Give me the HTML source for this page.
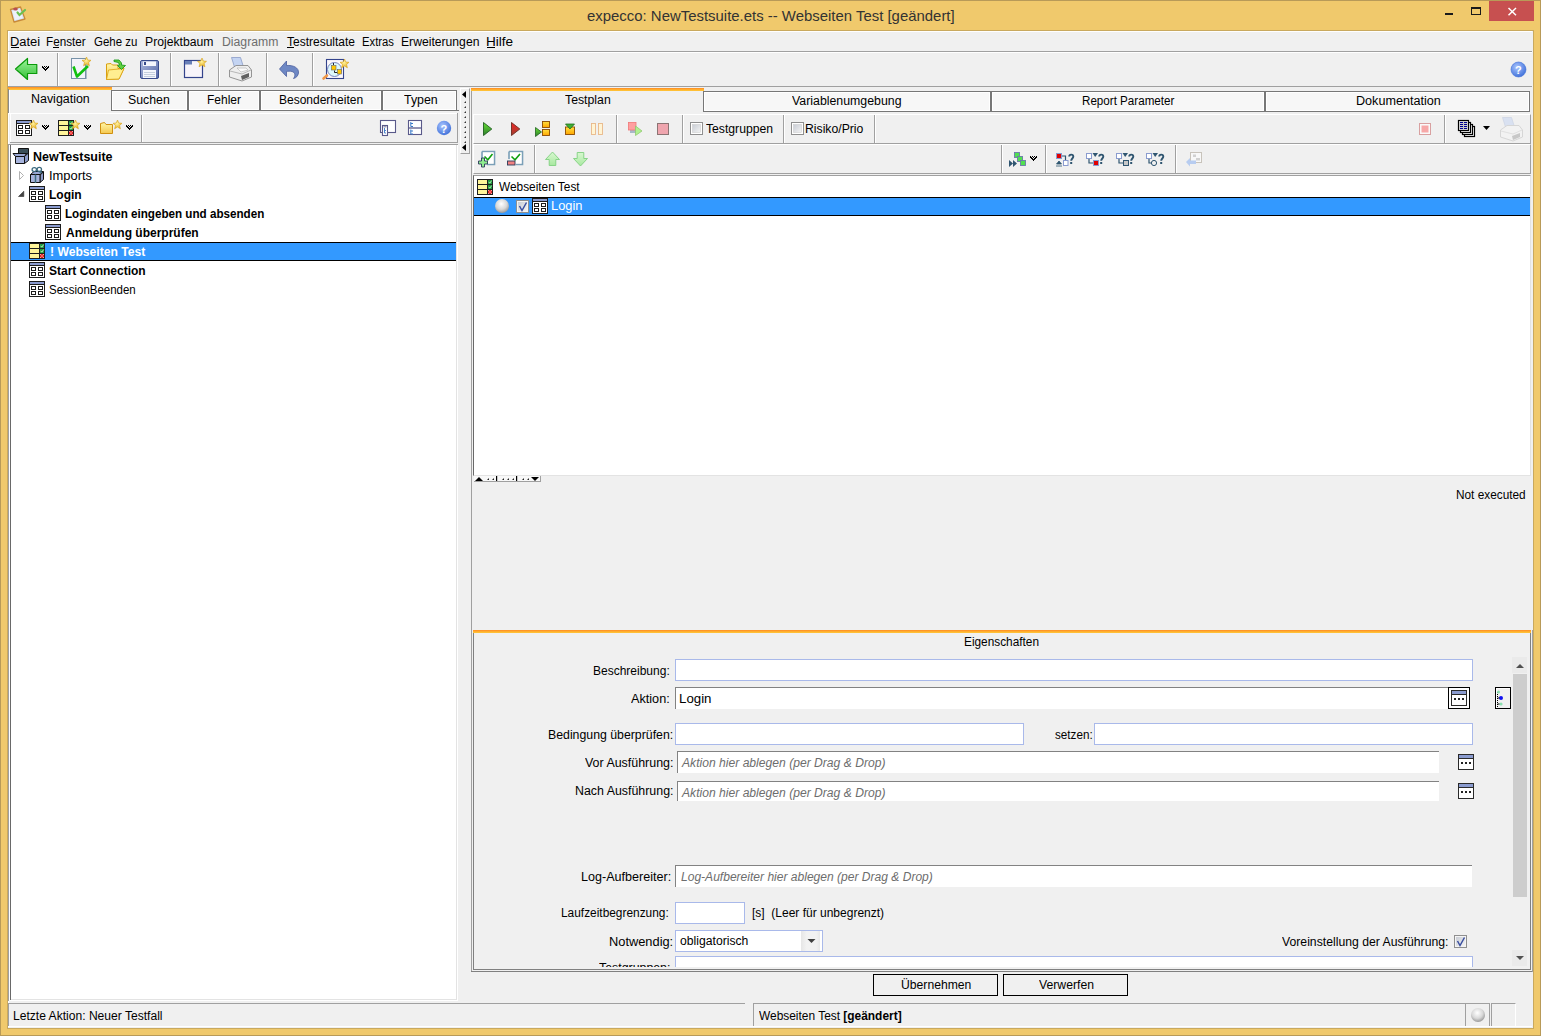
<!DOCTYPE html>
<html><head><meta charset="utf-8"><title>expecco</title>
<style>
html,body{margin:0;padding:0;}
body{width:1541px;height:1036px;position:relative;overflow:hidden;background:#F0C96C;font-family:"Liberation Sans",sans-serif;}
div{box-sizing:border-box;}
.a{position:absolute;}
.t{position:absolute;white-space:pre;transform-origin:0 0;font-family:"Liberation Sans",sans-serif;}
.hl{position:absolute;height:1px;}
.vl{position:absolute;width:1px;}
svg{position:absolute;overflow:visible;}
.tab{position:absolute;background:#F7F7F7;border:1px solid #777;box-shadow:inset 1px 1px 0 #fff, inset -1px -1px 0 #fff;}
.sep{position:absolute;width:2px;border-left:1px solid #a0a0a0;border-right:1px solid #fff;}
</style></head><body>
<!-- frame -->
<div class="a" style="left:0;top:0;width:1541px;height:1036px;border:1px solid #B89A58;"></div>
<div class="a" style="left:7px;top:30px;width:1527px;height:999px;border:1px solid #C9A95E;background:#F0F0F0;"></div>
<div class="hl" style="left:8px;top:31px;width:1524px;background:#fff"></div>
<div class="vl" style="left:8px;top:31px;height:996px;background:#fff"></div>
<!-- window buttons -->
<div class="a" style="left:1489px;top:1px;width:45px;height:20px;background:#C75050"></div>
<svg style="left:0;top:0" width="1541" height="30">
 <path d="M1508.5 8 L1516 15.2 M1516 8 L1508.5 15.2" stroke="#fff" stroke-width="1.5"/>
 <rect x="1445" y="13" width="8" height="2" fill="#1a1a1a"/>
 <rect x="1471.5" y="7.5" width="9" height="7" fill="none" stroke="#1a1a1a" stroke-width="1"/>
 <rect x="1471" y="7" width="10" height="2" fill="#1a1a1a"/>
</svg>
<!-- menu underline accents -->
<div class="hl" style="left:11px;top:47px;width:8px;background:#000"></div>
<div class="hl" style="left:53px;top:47px;width:6px;background:#000"></div>
<div class="hl" style="left:287px;top:47px;width:7px;background:#000"></div>
<div class="hl" style="left:487px;top:47px;width:8px;background:#000"></div>
<!-- menu bar bottom -->
<div class="hl" style="left:8px;top:51px;width:1524px;background:#A0A0A0"></div>
<div class="hl" style="left:8px;top:52px;width:1524px;background:#fff"></div>
<!-- toolbar separators -->
<div class="sep" style="left:57px;top:53px;height:33px"></div>
<div class="sep" style="left:170px;top:53px;height:33px"></div>
<div class="sep" style="left:218px;top:53px;height:33px"></div>
<div class="sep" style="left:266px;top:53px;height:33px"></div>
<div class="sep" style="left:312px;top:53px;height:33px"></div>
<!-- toolbar bottom -->
<div class="hl" style="left:8px;top:86px;width:1524px;background:#A0A0A0"></div>

<!-- ===== LEFT PANEL ===== -->
<div class="a" style="left:8px;top:87px;width:104px;height:3px;background:linear-gradient(#FF8A22,#FFB430 60%,#FFC83A)"></div>
<div class="vl" style="left:8px;top:89px;height:24px;background:#8a8a8a"></div>
<div class="vl" style="left:9px;top:90px;height:23px;background:#fff"></div>
<div class="tab" style="left:111px;top:90px;width:77px;height:21px;border-bottom-width:1px"></div>
<div class="tab" style="left:188px;top:90px;width:72px;height:21px;border-bottom-width:1px"></div>
<div class="tab" style="left:260px;top:90px;width:122px;height:21px;border-bottom-width:1px"></div>
<div class="tab" style="left:382px;top:90px;width:75px;height:21px;border-bottom-width:1px"></div>
<div class="hl" style="left:111px;top:110px;width:348px;background:#777"></div>
<div class="hl" style="left:9px;top:113px;width:448px;background:#fff"></div>
<div class="vl" style="left:10px;top:113px;height:29px;background:#fff"></div>
<div class="vl" style="left:457px;top:113px;height:30px;background:#A0A0A0"></div>
<div class="hl" style="left:10px;top:142px;width:448px;background:#A0A0A0"></div>
<div class="sep" style="left:141px;top:115px;height:27px"></div>
<!-- left tree -->
<div class="a" style="left:8px;top:144px;width:450px;height:857px;background:#fff;border-left:1px solid #A0A0A0;border-top:1px solid #A0A0A0;"></div>
<div class="vl" style="left:10px;top:145px;height:855px;background:#696969"></div>
<div class="vl" style="left:456px;top:145px;height:855px;background:#E3E3E3"></div>
<div class="hl" style="left:11px;top:999px;width:446px;background:#E3E3E3"></div>
<div class="a" style="left:11px;top:242px;width:445px;height:19px;background:#3399FF;border-top:1px solid #000;border-bottom:1px solid #000"></div>

<!-- splitter -->
<div class="a" style="left:460px;top:88px;width:10px;height:66px;border-left:1px solid #fff;border-top:1px solid #fff;border-right:1px solid #A0A0A0;border-bottom:1px solid #A0A0A0"></div>
<svg style="left:0;top:0" width="1" height="1">
 <path d="M466 91 L466 98 L462 94.5 Z" fill="#000"/>
 <path d="M466 144 L466 151 L462 147.5 Z" fill="#000"/>
 <g fill="#333"><path d="M464 103 L466 101 L466 103 Z"/><path d="M464 108 L466 106 L466 108 Z"/><path d="M464 113 L466 111 L466 113 Z"/><path d="M464 118 L466 116 L466 118 Z"/><path d="M464 123 L466 121 L466 123 Z"/><path d="M464 128 L466 126 L466 128 Z"/><path d="M464 133 L466 131 L466 133 Z"/><path d="M464 138 L466 136 L466 138 Z"/><path d="M464 143 L466 141 L466 143 Z"/></g>
</svg>

<!-- ===== RIGHT PANEL ===== -->
<div class="vl" style="left:471px;top:91px;height:881px;background:#A0A0A0"></div>
<div class="a" style="left:471px;top:88px;width:233px;height:3px;background:linear-gradient(#FF8A22,#FFB430 60%,#FFC83A)"></div>
<div class="tab" style="left:703px;top:91px;width:288px;height:21px;border-bottom-width:1px"></div>
<div class="tab" style="left:991px;top:91px;width:274px;height:21px;border-bottom-width:1px"></div>
<div class="tab" style="left:1265px;top:91px;width:265px;height:21px;border-bottom-width:1px"></div>
<!-- toolbar row 1 -->
<div class="a" style="left:473px;top:114px;width:1058px;height:30px;border-top:1px solid #fff;border-left:1px solid #fff;border-right:1px solid #A0A0A0;border-bottom:1px solid #A0A0A0"></div>
<div class="sep" style="left:616px;top:115px;height:28px"></div>
<div class="sep" style="left:682px;top:115px;height:28px"></div>
<div class="sep" style="left:783px;top:115px;height:28px"></div>
<div class="sep" style="left:874px;top:115px;height:28px"></div>
<div class="sep" style="left:1444px;top:115px;height:28px"></div>
<!-- toolbar row 2 -->
<div class="a" style="left:473px;top:144px;width:1058px;height:30px;border-top:1px solid #fff;border-left:1px solid #fff;border-right:1px solid #A0A0A0;border-bottom:1px solid #A0A0A0"></div>
<div class="sep" style="left:534px;top:145px;height:28px"></div>
<div class="sep" style="left:1001px;top:145px;height:28px"></div>
<div class="sep" style="left:1045px;top:145px;height:28px"></div>
<div class="sep" style="left:1175px;top:145px;height:28px"></div>
<!-- right tree -->
<div class="a" style="left:473px;top:175px;width:1058px;height:301px;background:#fff;border-left:1px solid #696969;border-top:1px solid #A0A0A0;border-right:1px solid #E3E3E3;border-bottom:1px solid #E3E3E3"></div>
<div class="a" style="left:474px;top:197px;width:1056px;height:19px;background:#3399FF;border-top:1px solid #000;border-bottom:1px solid #000"></div>
<!-- progress splitter -->
<div class="a" style="left:474px;top:476px;width:67px;height:6px;background:#F8F8F8;border-bottom:1px solid #A0A0A0;border-right:1px solid #A0A0A0"></div>
<svg style="left:0;top:0" width="1" height="1">
 <path d="M475 481 L483 481 L479 477 Z" fill="#000"/>
 <path d="M531 477 L539 477 L535 481 Z" fill="#000"/>
 <g fill="#222"><path d="M487 480 L489 478 L489 480 Z"/><path d="M492 480 L494 478 L494 480 Z"/><path d="M502 480 L504 478 L504 480 Z"/><path d="M507 480 L509 478 L509 480 Z"/><path d="M512 480 L514 478 L514 480 Z"/><path d="M522 480 L524 478 L524 480 Z"/><path d="M527 480 L529 478 L529 480 Z"/></g>
 <rect x="496" y="476" width="1.2" height="5" fill="#000"/><rect x="516" y="476" width="1.2" height="5" fill="#000"/>
</svg>

<!-- properties panel -->
<div class="a" style="left:473px;top:630px;width:1058px;height:3px;background:linear-gradient(#FF8A22,#FFB430 60%,#FFC83A)"></div>
<div class="hl" style="left:471px;top:971px;width:1062px;background:#808080"></div>
<div class="hl" style="left:473px;top:969px;width:1058px;background:#808080"></div>
<div class="vl" style="left:473px;top:633px;height:337px;background:#808080"></div>
<div class="vl" style="left:1530px;top:633px;height:337px;background:#808080"></div>
<div class="vl" style="left:1532px;top:630px;height:342px;background:#A0A0A0"></div>
<div class="a" style="left:474px;top:633px;width:1056px;height:334px;overflow:hidden">
 <div class="a" style="left:201px;top:26px;width:798px;height:22px;background:#fff;border:1px solid #A9B9EA"></div>
 <div class="a" style="left:201px;top:54px;width:773px;height:22px;background:#fff;border-top:1px solid #828282;border-left:1px solid #828282"></div>
 <div class="a" style="left:974px;top:54px;width:22px;height:22px;background:#fff;border:1px solid #000"></div>
 <div class="a" style="left:1021px;top:54px;width:16px;height:22px;background:#F0F0F0;border:1px solid #000;box-shadow:inset 1px 1px 0 #fff"></div>
 <div class="a" style="left:201px;top:90px;width:349px;height:22px;background:#fff;border:1px solid #A9B9EA"></div>
 <div class="a" style="left:620px;top:90px;width:379px;height:22px;background:#fff;border:1px solid #A9B9EA"></div>
 <div class="a" style="left:203px;top:118px;width:762px;height:22px;background:#fff;border-top:1px solid #828282;border-left:1px solid #828282"></div>
 <div class="a" style="left:203px;top:148px;width:762px;height:20px;background:#fff;border-top:1px solid #828282;border-left:1px solid #828282"></div>
 <div class="a" style="left:201px;top:232px;width:797px;height:22px;background:#fff;border-top:1px solid #828282;border-left:1px solid #828282"></div>
 <div class="a" style="left:201px;top:269px;width:70px;height:22px;background:#fff;border:1px solid #A9B9EA"></div>
 <div class="a" style="left:201px;top:297px;width:148px;height:22px;background:#fff;border:1px solid #A9B9EA"></div>
 <div class="a" style="left:327px;top:298px;width:19px;height:20px;background:linear-gradient(90deg,#E6E6E6,#F2F2F2 30%,#F2F2F2 80%,#E8E8E8)"></div>
 <div class="a" style="left:201px;top:323px;width:798px;height:22px;background:#fff;border:1px solid #A9B9EA"></div>
 <!-- scrollbar -->
 <div class="a" style="left:1038px;top:24px;width:15px;height:16px;background:#EAEAEA"></div>
 <div class="a" style="left:1039px;top:41px;width:14px;height:223px;background:#CDCDCD"></div>
 <div class="a" style="left:1038px;top:317px;width:15px;height:16px;background:#EAEAEA"></div>
</div>
<!-- buttons -->
<div class="a" style="left:873px;top:974px;width:125px;height:22px;border:1px solid #000;background:#F0F0F0"></div>
<div class="a" style="left:1003px;top:974px;width:125px;height:22px;border:1px solid #000;background:#F0F0F0"></div>

<!-- status bar -->
<div class="a" style="left:8px;top:1003px;width:737px;height:24px;border-top:1px solid #A0A0A0;border-left:1px solid #A0A0A0;"></div>
<div class="a" style="left:753px;top:1003px;width:713px;height:24px;border-top:1px solid #A0A0A0;border-left:1px solid #A0A0A0;"></div>
<div class="a" style="left:1465px;top:1003px;width:25px;height:24px;border-top:1px solid #A0A0A0;border-left:1px solid #A0A0A0;border-right:1px solid #A0A0A0"></div>
<div class="a" style="left:1491px;top:1003px;width:25px;height:24px;border-top:1px solid #A0A0A0;border-left:1px solid #A0A0A0;border-right:1px solid #fff"></div>
<div class="hl" style="left:8px;top:1026px;width:1524px;background:#fff"></div>
<svg style="left:0;top:0;" width="1541" height="1036" viewBox="0 0 1541 1036">
<defs>
 <linearGradient id="gG" x1="0" y1="0" x2="0" y2="1"><stop offset="0" stop-color="#9CF59C"/><stop offset="1" stop-color="#35C035"/></linearGradient>
 <linearGradient id="gPlay" x1="0" y1="0" x2="0" y2="1"><stop offset="0" stop-color="#66E033"/><stop offset="1" stop-color="#2E7D2E"/></linearGradient>
 <linearGradient id="gRed" x1="0" y1="0" x2="0" y2="1"><stop offset="0" stop-color="#F02525"/><stop offset="1" stop-color="#A04030"/></linearGradient>
 <linearGradient id="gOr" x1="0" y1="0" x2="0" y2="1"><stop offset="0" stop-color="#FFE040"/><stop offset="1" stop-color="#FFA500"/></linearGradient>
 <linearGradient id="gFold" x1="0" y1="0" x2="0" y2="1"><stop offset="0" stop-color="#FFF7A8"/><stop offset="1" stop-color="#F5C850"/></linearGradient>
 <linearGradient id="gFlop" x1="0" y1="0" x2="1" y2="1"><stop offset="0" stop-color="#AEBADD"/><stop offset="1" stop-color="#5366A6"/></linearGradient>
 <radialGradient id="gStar" cx="0.45" cy="0.4" r="0.6"><stop offset="0" stop-color="#FFF3A0"/><stop offset="1" stop-color="#E8B020"/></radialGradient>
 <radialGradient id="gHelp" cx="0.4" cy="0.35" r="0.7"><stop offset="0" stop-color="#A8C4FF"/><stop offset="1" stop-color="#3E6FD8"/></radialGradient>
 <radialGradient id="gBall" cx="0.45" cy="0.35" r="0.65"><stop offset="0" stop-color="#FFFFFF"/><stop offset="0.6" stop-color="#D8D8D8"/><stop offset="1" stop-color="#9A9A9A"/></radialGradient>
 <linearGradient id="gChk" x1="0" y1="0" x2="1" y2="1"><stop offset="0" stop-color="#C8CCD4"/><stop offset="1" stop-color="#F4F4F4"/></linearGradient>
 <linearGradient id="gArr" x1="0" y1="0" x2="0" y2="1"><stop offset="0" stop-color="#D8F8D0"/><stop offset="1" stop-color="#A8E8A0"/></linearGradient>
 <g id="star"><path d="M4.5 0 L5.8 3 L9 3.3 L6.6 5.4 L7.4 8.8 L4.5 7 L1.6 8.8 L2.4 5.4 L0 3.3 L3.2 3 Z" fill="url(#gStar)" stroke="#D9A520" stroke-width="0.6"/></g>
 <g id="chev" fill="#000"><rect x="0" y="0" width="1" height="1"/><rect x="2" y="0" width="1" height="1"/><rect x="4" y="0" width="1" height="1"/><rect x="6" y="0" width="1" height="1"/><rect x="0" y="1" width="1" height="1"/><rect x="1" y="1" width="1" height="1"/><rect x="3" y="1" width="1" height="1"/><rect x="5" y="1" width="1" height="1"/><rect x="6" y="1" width="1" height="1"/><rect x="1" y="2" width="1" height="1"/><rect x="2" y="2" width="1" height="1"/><rect x="4" y="2" width="1" height="1"/><rect x="5" y="2" width="1" height="1"/><rect x="2" y="3" width="1" height="1"/><rect x="3" y="3" width="1" height="1"/><rect x="4" y="3" width="1" height="1"/><rect x="3" y="4" width="1" height="1"/></g>
 <g id="grid">
  <rect x="0.5" y="0.5" width="15" height="15" fill="#fff" stroke="#1c1c1c"/>
  <rect x="1" y="1" width="14" height="2" fill="#8A9BCF"/>
  <path d="M1 3.5 h14" stroke="#1c1c1c"/>
  <rect x="2.5" y="5.5" width="4" height="3" fill="none" stroke="#1c1c1c"/>
  <rect x="9.5" y="5.5" width="4" height="3" fill="none" stroke="#1c1c1c"/>
  <rect x="2.5" y="10.5" width="4" height="3" fill="none" stroke="#1c1c1c"/>
  <rect x="9.5" y="10.5" width="4" height="3" fill="none" stroke="#1c1c1c"/>
 </g>
 <g id="ylist">
  <rect x="0" y="0" width="16" height="16" fill="#1e1e1e"/>
  <rect x="1" y="1" width="9" height="4" fill="#FFF59A"/>
  <rect x="1" y="6" width="9" height="4" fill="#FFF59A"/>
  <rect x="1" y="11" width="9" height="4" fill="#FFF59A"/>
  <rect x="11" y="1" width="4" height="4" fill="#1E9A3C"/>
  <rect x="11" y="6" width="4" height="4" fill="#1E9A3C"/>
  <rect x="11" y="11" width="4" height="4" fill="#fff"/>
  <path d="M11.6 2.8 L12.8 4.2 L14.6 1.6 M11.6 7.8 L12.8 9.2 L14.6 6.6" fill="none" stroke="#C8F0C8" stroke-width="0.9"/>
  <circle cx="13" cy="13" r="1.4" fill="none" stroke="#E00000" stroke-width="1.3"/>
 </g>
 <g id="dots"><rect x="0" y="0" width="2" height="2"/><rect x="3" y="0" width="2" height="2"/><rect x="6" y="0" width="2" height="2"/></g>
 <g id="ballbtn"><path d="M0.5 0.5 h12 v2 h-12z" fill="#8A9BCF"/></g>
</defs>

<!-- title icon -->
<path d="M10.5 9.5 L20.5 7 L25 19 L14 22 Z" fill="#D8E6F4" stroke="#C88A3A" stroke-width="1.3" stroke-linejoin="round"/>
<path d="M12.5 11 L19.5 9.2 L22.5 18 L15 20 Z" fill="#EEF2FA"/>
<ellipse cx="15.5" cy="9" rx="2.3" ry="1.6" fill="#B85050"/>
<path d="M17.5 12.5 L19.5 15 L25 10" fill="none" stroke="#6CC050" stroke-width="2.2" stroke-linecap="round"/>
<!-- ===== main toolbar ===== -->
<path d="M15.5 69 L27.5 58.5 L27.5 64.5 L36.8 64.5 L36.8 73.5 L27.5 73.5 L27.5 79.5 Z" fill="url(#gG)" stroke="#0A9A0A" stroke-width="1.2" stroke-linejoin="round"/>
<use href="#chev" x="42" y="66"/>
<!-- doc check star -->
<rect x="72.5" y="59" width="14" height="20" fill="#6E8AA0"/>
<rect x="71.5" y="58.5" width="14" height="20" fill="#F3F3FA" stroke="#7892A8"/>
<path d="M73.5 66.5 L77 76.5 L88 66" fill="none" stroke="#10C010" stroke-width="2.6" stroke-linejoin="round"/>
<use href="#star" x="82" y="57"/>
<!-- folder open -->
<path d="M106.5 64 L111 63.5 L112.5 65 L118 65 L118 68.5 L124 68.5 L119 79 L106.5 79.5 Z" fill="url(#gFold)" stroke="#D9A010" stroke-width="1"/>
<path d="M108.5 70 L124 68.5 L119 79 L106.5 79.5 Z" fill="#FFEE90" stroke="#D9A010" stroke-width="0.8"/>
<path d="M114 60 L119 60 L121.5 63 L121.5 65 L125.5 65.5 L121.5 69.5 L117.5 65.5 L119.5 65 L118.5 62.5 L114 61.5 Z" fill="#60D040" stroke="#1E9A1E" stroke-width="0.9"/>
<!-- floppy -->
<rect x="140.5" y="60.5" width="18" height="18" rx="1.5" fill="url(#gFlop)" stroke="#394C8C"/>
<rect x="143" y="61.5" width="13" height="4.5" fill="#F4F6FC"/>
<rect x="144" y="62" width="2" height="3" fill="#394C8C"/>
<rect x="143" y="70" width="13" height="8" fill="#F4F6FC"/>
<path d="M144 72.5 h11 M144 74.5 h11 M144 76.5 h11" stroke="#B8C4D4" stroke-width="0.8"/>
<!-- new window star -->
<rect x="184.5" y="60.5" width="18" height="17" fill="#F8F4FA" stroke="#34448C" stroke-width="1.2"/>
<rect x="185" y="61" width="7" height="3.5" fill="#6A80B8"/>
<use href="#star" x="197.5" y="58"/>
<!-- printer -->
<g transform="translate(-1271,-60)">
 <path d="M1502.5 117.5 L1511.5 117.5 L1514.5 127 L1505.5 127 Z" fill="#C4D4F2" stroke="#8A9CC8" stroke-width="0.8"/>
 <path d="M1500.5 130 L1507 125.5 L1519 125.5 L1522.5 130 L1522.5 137 L1513 141 L1500.5 137 Z" fill="#EEEEEE" stroke="#8A8A8A" stroke-width="0.9"/>
 <path d="M1501 131 L1513 134 L1522 130" fill="none" stroke="#A8A8A8" stroke-width="0.8"/>
 <path d="M1508 128 L1517 128 L1519 130 L1512 132 Z" fill="#FAFAFA" stroke="#B0B0B0" stroke-width="0.6"/>
 <path d="M1512 136 L1520 133 L1520 137 L1513 140 Z" fill="#606060"/>
</g>
<!-- undo -->
<path d="M279.5 69 L286.5 61 L286.5 65.5 C293 65 299 67.5 298.5 73 C298 76 296 78 293.5 78.5 C295.5 76 295.5 72.5 292 71.5 C290 71 288 71.2 286.5 71.5 L286.5 76.5 Z" fill="#6E88C4" stroke="#4A5E9E" stroke-width="0.8"/>
<!-- diagram search -->
<rect x="326.5" y="59.5" width="17" height="19" fill="#FBF8FC" stroke="#34448C" stroke-width="1.1"/>
<path d="M327 75.5 L323.5 78.5" stroke="#F09848" stroke-width="2.6" stroke-linecap="round"/>
<circle cx="334.5" cy="69.5" r="7" fill="#DDF8FC" stroke="#7A86C0" stroke-width="1"/>
<path d="M333.5 63 v2 M334.5 70.5 v2 h3" stroke="#111" stroke-width="0.9" fill="none"/>
<rect x="331.5" y="65.5" width="4.5" height="4.5" fill="#FFC800" stroke="#666" stroke-width="0.6"/>
<rect x="337.5" y="69.5" width="4" height="4.5" fill="#FFC800" stroke="#666" stroke-width="0.6"/>
<use href="#star" x="340" y="59"/>
<!-- help right -->
<circle cx="1518.5" cy="69.5" r="7.5" fill="url(#gHelp)" stroke="#3E6FD8" stroke-width="0.6"/>
<text x="1515" y="74" font-family="Liberation Sans" font-weight="bold" font-size="11" fill="#fff">?</text>

<!-- ===== left toolbar ===== -->
<use href="#grid" x="16" y="120"/>
<use href="#star" x="29" y="120"/>
<use href="#chev" x="42" y="125"/>
<use href="#ylist" x="58" y="120"/>
<use href="#star" x="71" y="120"/>
<use href="#chev" x="84" y="125"/>
<path d="M100.5 123.5 L104.5 122.5 L106 124.5 L112.5 124.5 L112.5 133.5 L100.5 133.5 Z" fill="url(#gFold)" stroke="#D09010" stroke-width="1"/>
<use href="#star" x="113" y="120"/>
<use href="#chev" x="126" y="125"/>
<!-- right icons -->
<rect x="380.5" y="120.5" width="15" height="12" fill="#fff" stroke="#5A5A8A" stroke-width="1.1"/>
<rect x="382.5" y="125.5" width="5" height="10" fill="#fff" stroke="#5A5A8A" stroke-width="1.1"/>
<rect x="383.5" y="126" width="3" height="1.5" fill="#A0A0B8"/>
<path d="M384.5 128 v5 h1.5 M384.5 130.5 h1.5" stroke="#3A7AC8" stroke-width="0.9" fill="none"/>
<rect x="408.5" y="120.5" width="13" height="14" fill="#fff" stroke="#5A5A8A" stroke-width="1.1"/>
<path d="M408.5 128 h13" stroke="#5A5A8A" stroke-width="1.3"/>
<path d="M410.8 122 v4.5 h2.2 M410.8 123.5 h2.2 M410.8 129.5 v4.5 h2.2 M410.8 131 h2.2" stroke="#3A7AC8" stroke-width="1" fill="none"/>
<circle cx="444" cy="128" r="7.2" fill="url(#gHelp)"/>
<text x="440.5" y="132.5" font-family="Liberation Sans" font-weight="bold" font-size="11" fill="#fff">?</text>

<!-- ===== right toolbar row 1 ===== -->
<path d="M483.5 122.5 L491.8 129 L483.5 135.5 Z" fill="url(#gPlay)" stroke="#1F5F1F" stroke-width="0.9" stroke-linejoin="round"/>
<path d="M511.5 122.5 L519.8 129 L511.5 135.5 Z" fill="url(#gRed)" stroke="#6A2A20" stroke-width="0.9" stroke-linejoin="round"/>
<path d="M535.5 127.5 L541.5 132 L535.5 136.5 Z" fill="url(#gPlay)" stroke="#1F5F1F" stroke-width="0.8"/>
<rect x="542.5" y="121.5" width="7" height="6" fill="url(#gOr)" stroke="#8A4A00" stroke-width="0.9"/>
<rect x="542.5" y="129.5" width="7" height="6" fill="url(#gOr)" stroke="#8A4A00" stroke-width="0.9"/>
<rect x="565.5" y="127" width="9" height="7.5" fill="url(#gOr)" stroke="#8A4A00" stroke-width="0.9"/>
<path d="M565.5 124 L574.5 124 L570 129 Z" fill="#40B030" stroke="#1F6F1F" stroke-width="0.8"/>
<rect x="591.5" y="123.5" width="4" height="11" fill="#FFF4D4" stroke="#E8B888" stroke-width="0.9"/>
<rect x="598.5" y="123.5" width="4" height="11" fill="#FFF4D4" stroke="#E8B888" stroke-width="0.9"/>
<rect x="630" y="129" width="6" height="4" fill="#A8B8C8"/>
<rect x="628.5" y="122.5" width="7.5" height="7.5" fill="#FFA0A0" stroke="#F07878" stroke-width="0.8"/>
<path d="M635.5 126 L642 131 L635.5 135.5 Z" fill="#B0F090" stroke="#90C870" stroke-width="0.8"/>
<rect x="657.5" y="123.5" width="11" height="11" fill="#EFA5AE" stroke="#8C7474" stroke-width="1"/>
<!-- checkboxes -->
<rect x="690.5" y="122.5" width="12" height="12" fill="#fff" stroke="#8F8F8F"/>
<rect x="692.5" y="124.5" width="8" height="8" fill="url(#gChk)" stroke="#C8C8C8" stroke-width="0.5"/>
<rect x="791.5" y="122.5" width="12" height="12" fill="#fff" stroke="#8F8F8F"/>
<rect x="793.5" y="124.5" width="8" height="8" fill="url(#gChk)" stroke="#C8C8C8" stroke-width="0.5"/>
<!-- right side -->
<rect x="1419.5" y="123.5" width="11" height="11" fill="#FAFAFA" stroke="#D8A0A0"/>
<rect x="1421.5" y="125.5" width="7" height="7" fill="#F7A8A8"/>
<g fill="#fff" stroke="#000" stroke-width="1.2">
 <rect x="1464.5" y="126.5" width="10" height="10"/>
 <rect x="1462.5" y="124.5" width="10" height="10"/>
 <rect x="1460.5" y="122.5" width="10" height="10"/>
 <rect x="1458.5" y="120.5" width="10" height="10"/>
</g>
<rect x="1459.2" y="121.2" width="8.6" height="8.6" fill="#C8C8C8"/>
<g fill="#000090"><rect x="1460" y="122" width="3" height="1"/><rect x="1464" y="122" width="3" height="1"/><rect x="1460" y="124" width="3" height="1"/><rect x="1464" y="124" width="3" height="1"/><rect x="1460" y="126" width="3" height="1"/><rect x="1464" y="126" width="3" height="1"/><rect x="1460" y="128" width="3" height="1"/><rect x="1464" y="128" width="3" height="1"/></g>
<path d="M1483 126 L1490 126 L1486.5 130 Z" fill="#000"/>
<g opacity="0.5">
 <path d="M1502.5 117.5 L1511.5 117.5 L1514.5 127 L1505.5 127 Z" fill="#C4D4F2" stroke="#A8B8D8" stroke-width="0.7"/>
 <path d="M1500.5 130 L1507 125.5 L1519 125.5 L1522.5 130 L1522.5 137 L1513 141 L1500.5 137 Z" fill="#F4F4F4" stroke="#B8B8B8" stroke-width="0.9"/>
 <path d="M1501 131 L1513 134 L1522 130" fill="none" stroke="#C8C8C8" stroke-width="0.8"/>
 <path d="M1512 136 L1520 133 L1520 137 L1513 140 Z" fill="#A0A0A0"/>
</g>

<!-- ===== right toolbar row 2 ===== -->
<path d="M482 151.5 h12.5 v13 h-7.5 M482 159 v-7.5" fill="none" stroke="#7BA0B8" stroke-width="1.6"/>
<rect x="483" y="152.5" width="10.5" height="11" fill="#fff"/>
<path d="M484.5 156.5 L487.8 159.8 L492.5 154" fill="none" stroke="#10A010" stroke-width="1.6"/>
<path d="M481.5 159.5 h3 v3 h3 v3 h-3 v3 h-3 v-3 h-3 v-3 h3 z" fill="#90EE90" stroke="#2A3A5A" stroke-width="0.9" transform="translate(0,-1.5)"/>
<path d="M509 151.5 h13.5 v13 h-6.5 M509 159 v-7.5" fill="none" stroke="#7BA0B8" stroke-width="1.6"/>
<rect x="510" y="152.5" width="11.5" height="11" fill="#fff"/>
<path d="M511.5 156.5 L515 159.8 L520 154" fill="none" stroke="#10A010" stroke-width="1.6"/>
<rect x="507.5" y="161" width="7.5" height="4" fill="#F08080" stroke="#2A3A5A" stroke-width="0.9"/>
<path d="M552.5 152 L559.5 159.5 L555.8 159.5 L555.8 165.5 L549.2 165.5 L549.2 159.5 L545.5 159.5 Z" fill="url(#gArr)" stroke="#80D080" stroke-width="0.9"/>
<path d="M580.5 166 L587.5 158.5 L583.8 158.5 L583.8 152.5 L577.2 152.5 L577.2 158.5 L573.5 158.5 Z" fill="url(#gArr)" stroke="#80D080" stroke-width="0.9"/>
<!-- green squares -->
<rect x="1014.5" y="152.5" width="5" height="5" fill="#50E050" stroke="#6A7AA8" stroke-width="0.9"/>
<rect x="1017.5" y="156.5" width="5" height="5" fill="#50E050" stroke="#6A7AA8" stroke-width="0.9"/>
<rect x="1020.5" y="160.5" width="5" height="5" fill="#50E050" stroke="#6A7AA8" stroke-width="0.9"/>
<path d="M1009 160 L1013 163.5 L1009 167 Z M1013 160 L1017 163.5 L1013 167 Z" fill="#2F5570"/>
<use href="#chev" x="1030" y="156"/>
<!-- q icons -->
<g fill="none" stroke="#2F5570" stroke-width="1.2">
 <path d="M1062 156 h3.5 v4.5"/>
 <path d="M1089 158.5 v4.5 h4"/>
 <path d="M1119 158.5 v4.5 h4"/>
 <path d="M1149 158.5 v4.5 h2.5"/>
</g>
<rect x="1056.5" y="153.5" width="5" height="5" fill="#E00000" stroke="#8A9BCF"/>
<rect x="1063.5" y="160.5" width="4.5" height="5" fill="#fff" stroke="#8A9BCF"/>
<path d="M1056 166 h6 M1059 161 L1056.5 164 h5 Z" stroke="#2F5570" fill="#2F5570" stroke-width="0.8"/>
<rect x="1086.5" y="153.5" width="5" height="5" fill="#fff" stroke="#8A9BCF"/>
<rect x="1093.5" y="160.5" width="5" height="5" fill="#E00000" stroke="#8A9BCF"/>
<rect x="1116.5" y="153.5" width="5" height="5" fill="#fff" stroke="#8A9BCF"/>
<rect x="1123.5" y="160.5" width="5" height="5" fill="#C8C8C8" stroke="#2F5570"/>
<rect x="1146.5" y="153.5" width="5" height="5" fill="#fff" stroke="#8A9BCF"/>
<circle cx="1154" cy="163" r="2.6" fill="none" stroke="#2F5570" stroke-width="1"/>
<g fill="#2F5570">
 <path d="M1092 153 h6 M1095 153 v4"/>
 <path d="M1092.5 153 h5.5 L1095.2 157 Z"/>
 <path d="M1122.5 153 h5.5 L1125.2 157 Z"/>
 <path d="M1152.5 153 h5.5 L1155.2 157 Z"/>
</g>
<path d="M1069.2 156.6 C1069.2 153.9 1073.3 153.9 1073.3 156.6 C1073.3 158.4 1071.2 158.6 1071.2 160.8" fill="none" stroke="#2F5570" stroke-width="1.9"/><rect x="1070.2" y="162" width="2" height="2" fill="#2F5570"/><path d="M1099.2 156.6 C1099.2 153.9 1103.3 153.9 1103.3 156.6 C1103.3 158.4 1101.2 158.6 1101.2 160.8" fill="none" stroke="#2F5570" stroke-width="1.9"/><rect x="1100.2" y="162" width="2" height="2" fill="#2F5570"/><path d="M1129.2 156.6 C1129.2 153.9 1133.3 153.9 1133.3 156.6 C1133.3 158.4 1131.2 158.6 1131.2 160.8" fill="none" stroke="#2F5570" stroke-width="1.9"/><rect x="1130.2" y="162" width="2" height="2" fill="#2F5570"/><path d="M1159.2 156.6 C1159.2 153.9 1163.3 153.9 1163.3 156.6 C1163.3 158.4 1161.2 158.6 1161.2 160.8" fill="none" stroke="#2F5570" stroke-width="1.9"/><rect x="1160.2" y="162" width="2" height="2" fill="#2F5570"/>
<g opacity="0.55">
 <rect x="1190.5" y="152.5" width="11" height="10" fill="#fff" stroke="#A8A090"/>
 <rect x="1193" y="154.5" width="3" height="2.5" fill="#B8B8B8"/><rect x="1196" y="158" width="4" height="2.5" fill="#B8B8B8"/>
 <path d="M1186 162 L1190 158 L1190 160.5 L1196 160.5 L1196 164 L1190 164 L1190 166.5 Z" fill="#8AB0F0"/>
</g>

<!-- ===== left tree icons ===== -->
<g stroke="#111" stroke-width="1" stroke-linejoin="round">
 <path d="M18.5 148.5 L28.5 148.5 L28.5 154 L18.5 154 Z" fill="#3A4E58"/>
 <path d="M24.5 156.5 L28.5 153 L28.5 160.5 L24.5 163.5 Z" fill="#8C9CCB"/>
 <rect x="15.5" y="156.5" width="9" height="7" fill="#A7B4DD"/>
 <path d="M13 153.5 L26.5 153.5 L24.5 156.5 L15.5 156.5 Z" fill="#9AA8D4"/>
</g>
<path d="M19.5 171.5 L23.5 175.5 L19.5 179.5 Z" fill="none" stroke="#A8A8A8" stroke-width="0.9"/>
<g stroke="#111" stroke-width="1" stroke-linejoin="round">
 <path d="M40 175 L43.5 172 L43.5 179.5 L40 182.5 Z" fill="#8C9CCB"/>
 <rect x="30.5" y="174.5" width="9.5" height="8" fill="#A7B4DD"/>
 <path d="M30.5 174.5 L34 171.5 L43.5 171.5 L40 174.5 Z" fill="#9AA8D4"/>
</g>
<path d="M35.5 174.5 v8.5 M39 171.5 L42 172.5" stroke="#3D6B80" stroke-width="1.5" fill="none"/>
<ellipse cx="34.3" cy="169.6" rx="2.2" ry="2" fill="none" stroke="#3D6B80" stroke-width="1.3"/>
<ellipse cx="39.3" cy="169.4" rx="2.2" ry="2" fill="none" stroke="#3D6B80" stroke-width="1.3"/>
<path d="M18.5 196.5 L23.8 196.5 L23.8 191.2 Z" fill="#444" stroke="#333" stroke-width="0.6"/>
<use href="#grid" x="29" y="186"/>
<use href="#grid" x="45" y="205"/>
<use href="#grid" x="45" y="224"/>
<use href="#ylist" x="29" y="243"/>
<use href="#grid" x="29" y="262"/>
<use href="#grid" x="29" y="281"/>

<!-- ===== right tree icons ===== -->
<use href="#ylist" x="477" y="179"/>
<circle cx="502" cy="206" r="7" fill="url(#gBall)"/>
<rect x="516.5" y="200.5" width="12" height="12" fill="#F4F4F4" stroke="#8F8F8F"/>
<rect x="518" y="202" width="9" height="9" fill="url(#gChk)"/>
<path d="M519.5 206 L522 210.5 L526.5 202.5" fill="none" stroke="#3B4FA0" stroke-width="1.5"/>
<use href="#grid" x="532" y="198"/>

<!-- status ball -->
<circle cx="1478" cy="1015" r="7" fill="url(#gBall)"/>
<!-- ===== form icons ===== -->
<g stroke="#2a2a2a" stroke-width="1" fill="#fff">
 <rect x="1451.5" y="690.5" width="15" height="15"/>
 <rect x="1458.5" y="754.5" width="15" height="15"/>
 <rect x="1458.5" y="783.5" width="15" height="15"/>
</g>
<rect x="1452" y="691" width="14" height="3" fill="#8A9BCF"/>
<rect x="1459" y="755" width="14" height="3" fill="#8A9BCF"/>
<rect x="1459" y="784" width="14" height="3" fill="#8A9BCF"/>
<path d="M1451.5 694.5 h15 M1458.5 758.5 h15 M1458.5 787.5 h15" stroke="#2a2a2a" stroke-width="1"/>
<g fill="#222">
 <rect x="1454" y="698" width="2" height="2"/><rect x="1458" y="698" width="2" height="2"/><rect x="1462" y="698" width="2" height="2"/>
 <rect x="1461" y="762" width="2" height="2"/><rect x="1465" y="762" width="2" height="2"/><rect x="1469" y="762" width="2" height="2"/>
 <rect x="1461" y="791" width="2" height="2"/><rect x="1465" y="791" width="2" height="2"/><rect x="1469" y="791" width="2" height="2"/>
</g>
<path d="M1497.5 692 v15" stroke="#000" stroke-width="1" stroke-dasharray="1 1"/>
<circle cx="1498.5" cy="692" r="1.5" fill="#8AE0B0"/>
<circle cx="1501" cy="698" r="2" fill="#1010F0"/>
<circle cx="1501" cy="704" r="1.6" fill="#8AE0B0"/>
<path d="M1497.5 698 h2 M1497.5 704 h2" stroke="#000"/>
<!-- scrollbar arrows -->
<path d="M1516 668 L1520 664 L1524 668 Z" fill="#505050"/>
<path d="M1516 956 L1524 956 L1520 960 Z" fill="#505050"/>
<!-- combo arrow -->
<path d="M807.5 939 L815.5 939 L811.5 943 Z" fill="#404040"/>
<!-- Voreinstellung checkbox -->
<rect x="1454.5" y="935.5" width="12" height="12" fill="#F4F4F4" stroke="#8F8F8F"/>
<rect x="1456" y="937" width="9" height="9" fill="url(#gChk)"/>
<path d="M1457.5 941 L1460 945.5 L1464.5 937.5" fill="none" stroke="#3B4FA0" stroke-width="1.5"/>
</svg>
<div class='t' style='left:587.01px;top:8px;font-size:15px;line-height:15px;color:#333;transform:scaleX(0.9946);'>expecco: NewTestsuite.ets -- Webseiten Test [geändert]</div>
<div class='t' style='left:9.92px;top:36px;font-size:12px;line-height:12px;color:#000;transform:scaleX(1.0769);'>Datei</div>
<div class='t' style='left:46.02px;top:36px;font-size:12px;line-height:12px;color:#000;transform:scaleX(0.9750);'>Fenster</div>
<div class='t' style='left:94.05px;top:36px;font-size:12px;line-height:12px;color:#000;transform:scaleX(0.9545);'>Gehe zu</div>
<div class='t' style='left:144.98px;top:36px;font-size:12px;line-height:12px;color:#000;transform:scaleX(1.0152);'>Projektbaum</div>
<div class='t' style='left:221.98px;top:36px;font-size:12px;line-height:12px;color:#6d6d6d;transform:scaleX(1.0185);'>Diagramm</div>
<div class='t' style='left:287.00px;top:36px;font-size:12px;line-height:12px;color:#000;transform:scaleX(1.0000);'>Testresultate</div>
<div class='t' style='left:362.06px;top:36px;font-size:12px;line-height:12px;color:#000;transform:scaleX(0.9394);'>Extras</div>
<div class='t' style='left:400.99px;top:36px;font-size:12px;line-height:12px;color:#000;transform:scaleX(1.0132);'>Erweiterungen</div>
<div class='t' style='left:485.87px;top:36px;font-size:12px;line-height:12px;color:#000;transform:scaleX(1.1304);'>Hilfe</div>
<div class='t' style='left:30.96px;top:93px;font-size:12px;line-height:12px;color:#000;transform:scaleX(1.0364);'>Navigation</div>
<div class='t' style='left:127.97px;top:94px;font-size:12px;line-height:12px;color:#000;transform:scaleX(1.0256);'>Suchen</div>
<div class='t' style='left:207.00px;top:94px;font-size:12px;line-height:12px;color:#000;transform:scaleX(1.0000);'>Fehler</div>
<div class='t' style='left:279.00px;top:94px;font-size:12px;line-height:12px;color:#000;transform:scaleX(1.0000);'>Besonderheiten</div>
<div class='t' style='left:404.00px;top:94px;font-size:12px;line-height:12px;color:#000;transform:scaleX(1.0312);'>Typen</div>
<div class='t' style='left:565.00px;top:94px;font-size:12px;line-height:12px;color:#000;transform:scaleX(1.0227);'>Testplan</div>
<div class='t' style='left:792.00px;top:95px;font-size:12px;line-height:12px;color:#000;transform:scaleX(1.0283);'>Variablenumgebung</div>
<div class='t' style='left:1082.03px;top:95px;font-size:12px;line-height:12px;color:#000;transform:scaleX(0.9684);'>Report Parameter</div>
<div class='t' style='left:1355.95px;top:95px;font-size:12px;line-height:12px;color:#000;transform:scaleX(1.0506);'>Dokumentation</div>
<div class='t' style='left:706.00px;top:123px;font-size:12px;line-height:12px;color:#000;transform:scaleX(1.0154);'>Testgruppen</div>
<div class='t' style='left:804.98px;top:123px;font-size:12px;line-height:12px;color:#000;transform:scaleX(1.0179);'>Risiko/Prio</div>
<div class='t' style='left:32.96px;top:151px;font-size:12px;line-height:12px;color:#000;font-weight:bold;transform:scaleX(1.0400);'>NewTestsuite</div>
<div class='t' style='left:48.92px;top:170px;font-size:12px;line-height:12px;color:#000;transform:scaleX(1.0769);'>Imports</div>
<div class='t' style='left:49.00px;top:189px;font-size:12px;line-height:12px;color:#000;font-weight:bold;transform:scaleX(1.0000);'>Login</div>
<div class='t' style='left:65.03px;top:208px;font-size:12px;line-height:12px;color:#000;font-weight:bold;transform:scaleX(0.9706);'>Logindaten eingeben und absenden</div>
<div class='t' style='left:66.00px;top:227px;font-size:12px;line-height:12px;color:#000;font-weight:bold;transform:scaleX(1.0000);'>Anmeldung überprüfen</div>
<div class='t' style='left:49.99px;top:246px;font-size:12px;line-height:12px;color:#fff;font-weight:bold;transform:scaleX(1.0108);'>! Webseiten Test</div>
<div class='t' style='left:49.00px;top:265px;font-size:12px;line-height:12px;color:#000;font-weight:bold;transform:scaleX(1.0000);'>Start Connection</div>
<div class='t' style='left:49.04px;top:284px;font-size:12px;line-height:12px;color:#000;transform:scaleX(0.9551);'>SessionBeenden</div>
<div class='t' style='left:499.00px;top:181px;font-size:12px;line-height:12px;color:#000;transform:scaleX(0.9878);'>Webseiten Test</div>
<div class='t' style='left:550.93px;top:200px;font-size:12px;line-height:12px;color:#fff;transform:scaleX(1.0714);'>Login</div>
<div class='t' style='left:1456.01px;top:489px;font-size:12px;line-height:12px;color:#000;transform:scaleX(0.9855);'>Not executed</div>
<div class='t' style='left:964.01px;top:636px;font-size:12px;line-height:12px;color:#000;transform:scaleX(0.9867);'>Eigenschaften</div>
<div class='t' style='left:593.00px;top:665px;font-size:12px;line-height:12px;color:#000;transform:scaleX(1.0000);'>Beschreibung:</div>
<div class='t' style='left:631.00px;top:693px;font-size:12px;line-height:12px;color:#000;transform:scaleX(1.0556);'>Aktion:</div>
<div class='t' style='left:678.89px;top:693px;font-size:12px;line-height:12px;color:#000;transform:scaleX(1.1071);'>Login</div>
<div class='t' style='left:547.98px;top:729px;font-size:12px;line-height:12px;color:#000;transform:scaleX(1.0250);'>Bedingung überprüfen:</div>
<div class='t' style='left:1055.00px;top:729px;font-size:12px;line-height:12px;color:#000;transform:scaleX(0.9737);'>setzen:</div>
<div class='t' style='left:585.00px;top:757px;font-size:12px;line-height:12px;color:#000;transform:scaleX(1.0357);'>Vor Ausführung:</div>
<div class='t' style='left:574.97px;top:785px;font-size:12px;line-height:12px;color:#000;transform:scaleX(1.0323);'>Nach Ausführung:</div>
<div class='t' style='left:682.00px;top:757px;font-size:12px;line-height:12px;color:#6d6d6d;font-style:italic;transform:scaleX(1.0100);'>Aktion hier ablegen (per Drag &amp; Drop)</div>
<div class='t' style='left:682.00px;top:787px;font-size:12px;line-height:12px;color:#6d6d6d;font-style:italic;transform:scaleX(1.0100);'>Aktion hier ablegen (per Drag &amp; Drop)</div>
<div class='t' style='left:580.95px;top:871px;font-size:12px;line-height:12px;color:#000;transform:scaleX(1.0476);'>Log-Aufbereiter:</div>
<div class='t' style='left:681.00px;top:871px;font-size:12px;line-height:12px;color:#6d6d6d;font-style:italic;transform:scaleX(1.0040);'>Log-Aufbereiter hier ablegen (per Drag &amp; Drop)</div>
<div class='t' style='left:561.01px;top:907px;font-size:12px;line-height:12px;color:#000;transform:scaleX(0.9907);'>Laufzeitbegrenzung:</div>
<div class='t' style='left:752.00px;top:907px;font-size:12px;line-height:12px;color:#000;transform:scaleX(1.0000);'>[s]  (Leer für unbegrenzt)</div>
<div class='t' style='left:608.93px;top:936px;font-size:12px;line-height:12px;color:#000;transform:scaleX(1.0690);'>Notwendig:</div>
<div class='t' style='left:680.00px;top:935px;font-size:12px;line-height:12px;color:#000;transform:scaleX(1.0149);'>obligatorisch</div>
<div class='t' style='left:1282.00px;top:936px;font-size:12px;line-height:12px;color:#000;transform:scaleX(1.0185);'>Voreinstellung der Ausführung:</div>
<div class='t' style='left:599.00px;top:962px;font-size:12px;line-height:12px;color:#000;transform:scaleX(1.0294);clip-path:inset(0 0 7px 0);'>Testgruppen:</div>
<div class='t' style='left:900.99px;top:979px;font-size:12px;line-height:12px;color:#000;transform:scaleX(1.0147);'>Übernehmen</div>
<div class='t' style='left:1039.00px;top:979px;font-size:12px;line-height:12px;color:#000;transform:scaleX(1.0189);'>Verwerfen</div>
<div class='t' style='left:12.99px;top:1010px;font-size:12px;line-height:12px;color:#000;transform:scaleX(1.0068);'>Letzte Aktion: Neuer Testfall</div>
<div class='t' style='left:759.00px;top:1010px;font-size:12px;line-height:12px;color:#000;transform:scaleX(0.9930);'>Webseiten Test <b>[geändert]</b></div>
</body></html>
